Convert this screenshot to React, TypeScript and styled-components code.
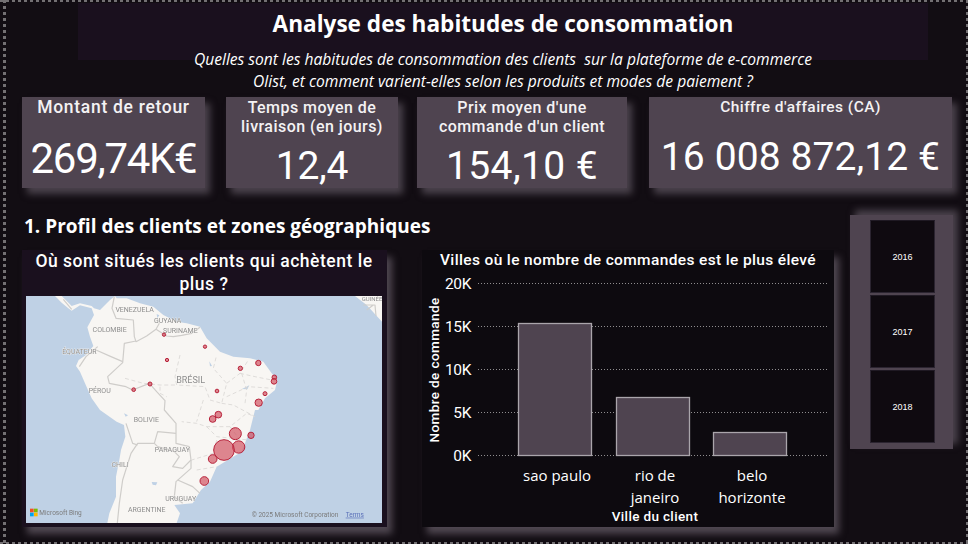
import React from "react";
import styled, { createGlobalStyle } from "styled-components";

const Global = createGlobalStyle`
  html, body { margin: 0; padding: 0; background: #120d13; }
  #root { width: 968px; height: 544px; overflow: hidden; }
`;

const SEGOE = `"Open Sans", "Noto Sans", sans-serif`;
const DIN = `Roboto, "Noto Sans", sans-serif`;
const DOT = "#737073";

const Page = styled.div`
  box-sizing: border-box;
  width: 968px;
  height: 544px;
  color: #fff;
  overflow: hidden;
  padding: 3px 15px 0 22px;
  background-color: #120d13;
  background-image:
    repeating-linear-gradient(90deg, ${DOT} 0 3px, transparent 3px 6px),
    repeating-linear-gradient(90deg, ${DOT} 0 3px, transparent 3px 6px),
    repeating-linear-gradient(180deg, ${DOT} 0 3px, transparent 3px 6px),
    repeating-linear-gradient(180deg, ${DOT} 0 3px, transparent 3px 6px);
  background-repeat: no-repeat;
  background-size: 100% 2px, 100% 2px, 3px 100%, 2px 100%;
  background-position: 0 0, 0 100%, 3px 0, 100% 0;
`;

const Header = styled.header`
  display: flex;
  flex-direction: column;
  align-items: center;
  width: 850px;
  height: 94px;
  margin-left: 56px;
`;

const Banner = styled.div`
  box-sizing: border-box;
  flex: none;
  width: 850px;
  height: 57px;
  background: #1a101e;
  padding-top: 6px;
  text-align: center;
`;

const Title = styled.h1`
  margin: 0;
  font: 700 22.6px/30px ${SEGOE};
  color: #fff;
`;

const Subtitle = styled.p`
  margin: -12px 0 0;
  font: italic 400 15.6px/22px ${SEGOE};
  color: #fff;
  text-align: center;
  white-space: pre-wrap;
`;

const KpiRow = styled.section`
  display: flex;
  height: 91px;
`;

const Kpi = styled.div<{ $w: number; $gap: number }>`
  box-sizing: border-box;
  width: ${(p) => p.$w}px;
  margin-right: ${(p) => p.$gap}px;
  height: 91px;
  background: #4f4450;
  box-shadow: 5px 6px 7px rgba(120, 110, 122, 0.55);
  display: flex;
  flex-direction: column;
  align-items: center;
  text-align: center;
  overflow: hidden;
`;

const KpiLabel = styled.div<{ $size: number; $ls: number }>`
  font: 500 ${(p) => p.$size}px/19px ${DIN};
  letter-spacing: ${(p) => p.$ls}px;
  height: 38px;
  padding-top: 1px;
  color: #f4f2f4;
  white-space: nowrap;
`;

const KpiValue = styled.div<{ $size: number; $mt: number; $ls: number }>`
  font: 400 ${(p) => p.$size}px/44px ${DIN};
  letter-spacing: ${(p) => p.$ls}px;
  margin-top: ${(p) => p.$mt}px;
  color: #fff;
  white-space: nowrap;
`;

const Lower = styled.section`
  display: grid;
  grid-template-columns: 812px 103px;
  column-gap: 16px;
  margin-top: 25px;
  align-items: start;
`;

const LeftArea = styled.div`
  display: grid;
  grid-template-columns: 365px 412px;
  grid-template-rows: 37px 277px;
  column-gap: 35px;
`;

const SectionTitle = styled.h2`
  grid-column: 1 / 3;
  margin: 0;
  padding: 1px 0 0 2px;
  font: 700 19px/24px ${SEGOE};
  color: #fff;
  white-space: nowrap;
`;

const MapCard = styled.article`
  background: #1a101e;
  box-shadow: 5px 7px 7px rgba(120, 110, 122, 0.6);
  padding: 0 5px 4px 4px;
  display: flex;
  flex-direction: column;
`;

const MapTitle = styled.h3`
  margin: 0;
  height: 46px;
  font: 500 17.5px/23px ${DIN};
  letter-spacing: 0.52px;
  text-align: center;
  color: #fff;
`;

const MapSvg = styled.svg`
  display: block;
  width: 356px;
  height: 227px;
  filter: blur(0.3px);
`;

const ChartCard = styled.article`
  background: #0d0a0f;
  box-shadow: 5px 7px 7px rgba(120, 110, 122, 0.6);
`;

const ChartSvg = styled.svg`
  display: block;
  width: 412px;
  height: 277px;
`;

const Slicer = styled.aside`
  box-sizing: border-box;
  margin-top: 2px;
  width: 103px;
  height: 234px;
  background: #4f4450;
  box-shadow: 5px -5px 7px rgba(120, 110, 122, 0.55);
  padding: 5px 18px 6px 20px;
  display: flex;
  flex-direction: column;
  gap: 2px;
`;

const Tile = styled.button`
  flex: 1;
  width: 65px;
  padding: 2px 0 0;
  border: 1px solid #2b2430;
  border-top-color: #1f1923;
  background: #0f0a10;
  color: #fff;
  font: 400 9px/1 "Liberation Sans", Arial, sans-serif;
`;

const LAND = "#f8f6f3";
const SEA = "#bfd1e5";
const BORDER = "#cfcdca";

const labels: [string, number, number][] = [
  ["VENEZUELA", 404, 217],
  ["GUYANA", 503, 248],
  ["SURINAME", 541, 280],
  ["COLOMBIE", 329, 275],
  ["ÉQUATEUR", 238, 343],
  ["PÉROU", 299, 460],
  ["BOLIVIE", 439, 545],
  ["PARAGUAY", 517, 635],
  ["CHILI", 360, 680],
  ["URUGUAY", 542, 784],
  ["ARGENTINE", 440, 815],
];

const bubbles: [number, number, number][] = [
  [492, 284, 5],
  [615, 320, 5],
  [501, 360, 5],
  [721, 385, 6.5],
  [775, 369, 8],
  [823, 412, 7],
  [822, 424, 8.5],
  [795, 461, 6],
  [651, 453, 5.5],
  [450, 432, 6],
  [401, 449, 5.5],
  [776, 488, 11],
  [655, 524, 10],
  [638, 537, 10],
  [706, 581, 18],
  [753, 586, 9.5],
  [716, 621, 18.5],
  [672, 630, 31],
  [638, 657, 13],
  [613, 723, 13],
];

const countryLines = [
  "M343 170 L336 205 L348 235 L400 240 L403 290 L408 305 L440 288 L468 268 L478 250 M468 268 L500 288 L520 290 L545 286 L575 280 L600 262",
  "M408 303 L373 310 L368 368 L323 410 L328 430 L378 440 L398 450 L448 430 L470 455 L495 482 L493 510 L528 550 L528 610 L568 620 L573 660 L548 685 L518 680 L538 650 L523 635 L473 620 L463 610",
  "M528 580 L473 575 L463 610 L413 610 L393 640 L368 720 L358 790 L352 849",
  "M378 550 L398 610 L413 615",
  "M573 660 L573 685 L528 725 L523 770 L548 790",
  "M533 720 L578 740 L600 760",
  "M288 330 L333 350 L368 365",
  "M293 320 L258 350 L238 380",
  "M1090 195 L1125 195 L1128 228 M1100 210 L1120 195",
  "M190 178 L215 208",
];

const stateLines = [
  "M540 345 L525 410 L530 435 L615 440 L630 480 L665 490 L680 430 L640 385 L650 345",
  "M680 430 L720 400 L745 360 M720 400 L765 410 L815 420 M680 470 L745 440 L820 445",
  "M665 490 L700 495 L765 530 L740 520 L690 560 L620 560 L590 550 L545 545",
  "M620 560 L650 590 L745 600 M690 560 L720 600 M650 600 L640 640 L575 660 M590 690 L650 680",
  "M375 415 L430 430 L480 435 L530 435 M480 440 L480 460 L500 470",
  "M610 480 L590 545 M725 400 L740 450 L735 490",
];

const yTicks = [
  ["20K", 33],
  ["15K", 76],
  ["10K", 119],
  ["5K", 162],
  ["0K", 205],
] as const;

const bars = [
  { x: 96, top: 73, w: 74 },
  { x: 194, top: 147, w: 74 },
  { x: 291, top: 182, w: 74 },
];

const MapView = () => (
  <MapSvg viewBox="78 168 1068 681" role="img" aria-label="Carte de l'Amérique du Sud">
    <rect x="78" y="168" width="1068" height="681" fill={SEA} />
    <path
      fill={LAND}
      d="M165 168 L185 188 L205 205 L215 212 L240 196 L275 205 L282 225 L262 262 L270 290 L280 318 L258 345 L236 360 L228 378 L240 395 L255 430 L275 475 L300 510 L350 545 L372 555 L376 590 L363 630 L358 660 L348 710 L348 770 L328 820 L322 849 L530 849 L540 820 L523 795 L578 790 L603 750 L630 725 L650 680 L725 635 L750 570 L765 510 L775 510 L795 475 L825 450 L832 420 L815 400 L790 365 L750 355 L700 350 L660 335 L620 295 L600 260 L560 250 L530 245 L490 225 L460 200 L420 190 L380 175 L350 175 L345 168 L330 180 L300 210 L282 205 L275 198 L240 190 L215 198 L195 178 L185 168 Z"
    />
    <path fill={LAND} d="M1065 168 L1100 195 L1146 245 L1146 168 Z" />
    <path
      fill={SEA}
      d="M455 726 L472 727 L468 736 L458 734 Z M628 364 L636 378 L630 379 Z M726 447 L748 436 L742 448 Z M372 520 L384 526 L377 530 Z M470 222 L478 226 L472 234 Z"
    />
    <g fill="none" stroke={BORDER} strokeWidth="3.6" strokeLinejoin="round">
      {countryLines.map((d) => (
        <path key={d} d={d} />
      ))}
    </g>
    <g fill="none" stroke="#d8d6d3" strokeWidth="2.4" strokeDasharray="12 8">
      {stateLines.map((d) => (
        <path key={d} d={d} />
      ))}
    </g>
    <g fill="#8e8e8e" fontFamily="Roboto, sans-serif" fontSize="21" textAnchor="middle">
      {labels.map(([t, x, y]) => (
        <text key={t} x={x} y={y} stroke={LAND} strokeWidth="2" paintOrder="stroke">
          {t}
        </text>
      ))}
      <text x="572" y="430" fontSize="27" stroke={LAND} strokeWidth="2" paintOrder="stroke">
        BRÉSIL
      </text>
      <text x="1116" y="184" fontSize="18">
        GUINÉE
      </text>
    </g>
    <g fill="#d0505f" fillOpacity="0.68" stroke="#b8233b" strokeWidth="3">
      {bubbles.map(([x, y, r]) => (
        <circle key={`${x}-${y}`} cx={x} cy={y} r={r} />
      ))}
    </g>
    <rect x="90" y="806" width="11" height="11" fill="#f25022" />
    <rect x="102" y="806" width="11" height="11" fill="#7fba00" />
    <rect x="90" y="818" width="11" height="11" fill="#00a4ef" />
    <rect x="102" y="818" width="11" height="11" fill="#ffb900" />
    <g fontFamily="Roboto, sans-serif" fontSize="19.5">
      <text x="118" y="824" fill="#7b7b7b">Microsoft Bing</text>
      <text x="755" y="830" fill="#7b7b7b">© 2025 Microsoft Corporation</text>
      <text x="1037" y="830" fill="#5a6fb8" textDecoration="underline">Terms</text>
    </g>
  </MapSvg>
);

const ChartView = () => (
  <ChartSvg viewBox="0 0 412 277" role="img" aria-label="Villes où le nombre de commandes est le plus élevé">
    <text x="206" y="15" fill="#fff" fontFamily={DIN} fontWeight="500" fontSize="15.5" letterSpacing="0.36" textAnchor="middle">
      Villes où le nombre de commandes est le plus élevé
    </text>
    {yTicks.map(([t, y]) => (
      <g key={t}>
        <line x1="56" x2="406" y1={y + 0.5} y2={y + 0.5} stroke="#8f8d8f" strokeDasharray="1 2" />
        <text x="49" y={y + 6} fill="#fff" fontFamily={DIN} fontSize="15.5" letterSpacing="-0.4" textAnchor="end">
          {t}
        </text>
      </g>
    ))}
    {bars.map((b) => (
      <rect key={b.x} x={b.x + 0.5} y={b.top + 0.5} width={b.w - 1} height={205 - b.top} fill="#4f4450" stroke="#aaa5ab" strokeWidth="1.3" />
    ))}
    <g fill="#fff" fontFamily={SEGOE} fontSize="15" textAnchor="middle">
      <text x="135" y="231">sao paulo</text>
      <text x="233" y="231">rio de</text>
      <text x="233" y="253">janeiro</text>
      <text x="330" y="231">belo</text>
      <text x="330" y="253">horizonte</text>
    </g>
    <text x="233" y="271" fill="#fff" fontFamily={DIN} fontWeight="500" fontSize="13.5" letterSpacing="0.35" textAnchor="middle">
      Ville du client
    </text>
    <text
      transform="translate(17 120) rotate(-90)"
      fill="#fff"
      fontFamily={DIN}
      fontWeight="500"
      fontSize="13.5"
      letterSpacing="0.4"
      textAnchor="middle"
    >
      Nombre de commande
    </text>
  </ChartSvg>
);

export default function App() {
  return (
    <Page>
      <Global />
      <Header>
        <Banner>
          <Title>Analyse des habitudes de consommation</Title>
        </Banner>
        <Subtitle>
          {"Quelles sont les habitudes de consommation des clients  sur la plateforme de e-commerce\nOlist, et comment varient-elles selon les produits et modes de paiement ?"}
        </Subtitle>
      </Header>
      <KpiRow>
        <Kpi $w={183} $gap={21}>
          <KpiLabel $size={17.5} $ls={0.7}>Montant de retour</KpiLabel>
          <KpiValue $size={42} $mt={1} $ls={-1.3}>269,74K€</KpiValue>
        </Kpi>
        <Kpi $w={172} $gap={19}>
          <KpiLabel $size={16} $ls={0.45}>Temps moyen de<br />livraison (en jours)</KpiLabel>
          <KpiValue $size={39} $mt={8} $ls={-0.2}>12,4</KpiValue>
        </Kpi>
        <Kpi $w={210} $gap={22}>
          <KpiLabel $size={16} $ls={0.45}>Prix moyen d'une<br />commande d'un client</KpiLabel>
          <KpiValue $size={39} $mt={8} $ls={0.4}>154,10 €</KpiValue>
        </Kpi>
        <Kpi $w={303} $gap={0}>
          <KpiLabel $size={15.5} $ls={0.45}>Chiffre d'affaires (CA)</KpiLabel>
          <KpiValue $size={39} $mt={-1} $ls={0.1}>16 008 872,12 €</KpiValue>
        </Kpi>
      </KpiRow>
      <Lower>
        <LeftArea>
          <SectionTitle>1. Profil des clients et zones géographiques</SectionTitle>
          <MapCard>
            <MapTitle>Où sont situés les clients qui achètent le plus ?</MapTitle>
            <MapView />
          </MapCard>
          <ChartCard>
            <ChartView />
          </ChartCard>
        </LeftArea>
        <Slicer>
          <Tile>2016</Tile>
          <Tile>2017</Tile>
          <Tile>2018</Tile>
        </Slicer>
      </Lower>
    </Page>
  );
}
